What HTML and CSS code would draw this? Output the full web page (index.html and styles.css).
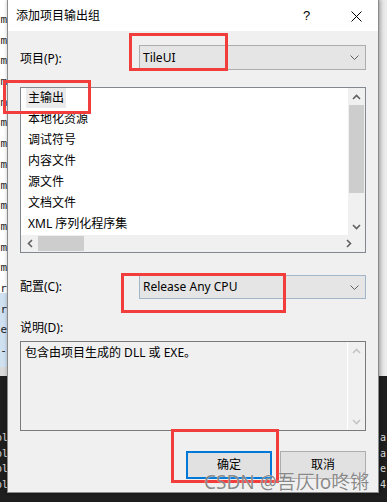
FILE: index.html
```html
<!DOCTYPE html>
<html lang="zh-CN">
<head>
<meta charset="utf-8">
<title>添加项目输出组</title>
<link rel="stylesheet" href="styles.css">
</head>
<body>
<div class="desktop">
  <div class="editor-bg">
    <div class="bg-top">
      <div class="strip-left">
        <div class="code-line">m</div><div class="code-line">m</div><div class="code-line">m</div><div class="code-line">m</div>
        <div class="code-line">m</div><div class="code-line">m</div><div class="code-line">m</div><div class="code-line">m</div>
        <div class="code-line">m</div><div class="code-line">m</div><div class="code-line">m</div><div class="code-line">m</div>
        <div class="code-line">m</div><div class="code-line">ar</div>
        <div class="code-line sel">r.</div><div class="code-line sel">e</div><div class="code-line sel">-)</div>
      </div>
      <div class="strip-mid"></div>
      <div class="strip-right"></div>
    </div>
    <div class="bg-bottom">
      <div class="dark-left">
        <div class="dark-line">ol</div><div class="dark-line">ol</div><div class="dark-line">ol</div><div class="dark-line">ol</div>
      </div>
      <div class="dark-right">
        <div class="dark-line">a</div><div class="dark-line">a</div><div class="dark-line">e</div><div class="dark-line">4</div>
      </div>
    </div>
  </div>

  <div class="dialog">
    <div class="titlebar">
      <span class="title">添加项目输出组</span>
      <span class="help">?</span>
      <svg class="close" width="11" height="11" viewBox="0 0 11 11"><path d="M0.5 0.5 L10.5 10.5 M10.5 0.5 L0.5 10.5" stroke="#000" stroke-width="1" fill="none"/></svg>
    </div>
    <div class="dlg-body">
      <div class="field-row row-project">
        <span class="field-label">项目(P):</span>
        <div class="combo">
          <span class="combo-text">TileUI</span>
          <svg class="combo-arrow" width="9" height="5" viewBox="0 0 9 5"><path d="M0.5 0.5 L4.5 4.5 L8.5 0.5" stroke="#606060" stroke-width="1" fill="none"/></svg>
        </div>
      </div>

      <div class="listbox">
        <div class="list-main">
          <ul class="items">
            <li class="item selected">主输出</li>
            <li class="item">本地化资源</li>
            <li class="item">调试符号</li>
            <li class="item">内容文件</li>
            <li class="item">源文件</li>
            <li class="item">文档文件</li>
            <li class="item">XML 序列化程序集</li>
          </ul>
          <div class="vscroll">
            <div class="sb-btn"><svg width="9" height="6" viewBox="0 0 9 6"><path d="M1 5 L4.5 1.5 L8 5" stroke="#606060" stroke-width="1.6" fill="none"/></svg></div>
            <div class="vthumb"></div>
            <div class="sb-fill"></div>
            <div class="sb-btn"><svg width="9" height="6" viewBox="0 0 9 6"><path d="M1 1 L4.5 4.5 L8 1" stroke="#606060" stroke-width="1.6" fill="none"/></svg></div>
          </div>
        </div>
        <div class="hscroll">
          <div class="sb-btn-h"><svg width="6" height="9" viewBox="0 0 6 9"><path d="M5 1 L1.5 4.5 L5 8" stroke="#606060" stroke-width="1.6" fill="none"/></svg></div>
          <div class="hthumb"></div>
          <div class="sb-fill"></div>
          <div class="sb-btn-h"><svg width="6" height="9" viewBox="0 0 6 9"><path d="M1 1 L4.5 4.5 L1 8" stroke="#606060" stroke-width="1.6" fill="none"/></svg></div>
          <div class="sb-corner"></div>
        </div>
      </div>

      <div class="field-row row-config">
        <span class="field-label">配置(C):</span>
        <div class="combo combo-focus">
          <span class="combo-text">Release Any CPU</span>
          <svg class="combo-arrow" width="9" height="5" viewBox="0 0 9 5"><path d="M0.5 0.5 L4.5 4.5 L8.5 0.5" stroke="#606060" stroke-width="1" fill="none"/></svg>
        </div>
      </div>

      <div class="desc-label">说明(D):</div>
      <div class="textbox">
        <div class="desc-text">包含由项目生成的 DLL 或 EXE。</div>
        <div class="vscroll vscroll-off">
          <div class="sb-btn"><svg width="9" height="6" viewBox="0 0 9 6"><path d="M1 5 L4.5 1.5 L8 5" stroke="#c4c4c4" stroke-width="1.6" fill="none"/></svg></div>
          <div class="sb-fill"></div>
          <div class="sb-btn"><svg width="9" height="6" viewBox="0 0 9 6"><path d="M1 1 L4.5 4.5 L8 1" stroke="#c4c4c4" stroke-width="1.6" fill="none"/></svg></div>
        </div>
      </div>

      <div class="buttons">
        <button class="btn btn-default">确定</button>
        <button class="btn">取消</button>
      </div>
    </div>
  </div>

  <div class="mark mark-project"></div>
  <div class="mark mark-main"></div>
  <div class="mark mark-config"></div>
  <div class="mark mark-ok"></div>
  <div class="watermark">CSDN @吾仄lo咚锵</div>
</div>
</body>
</html>
```
FILE: styles.css
```css
* { box-sizing: border-box; }
html, body { margin: 0; padding: 0; }
body {
  width: 387px;
  height: 502px;
  overflow: hidden;
  font-family: "Noto Sans", "Noto Sans CJK SC", "Microsoft YaHei", sans-serif;
  font-size: 12px;
  color: #000;
}
.desktop {
  position: relative;
  width: 387px;
  height: 502px;
  overflow: hidden;
  background: #1e1e1e;
}

/* background editor */
.editor-bg { display: flex; flex-direction: column; height: 502px; }
.bg-top { display: flex; height: 376px; }
.strip-left {
  width: 7px;
  background: linear-gradient(#fff 0, #fff 293px, #cfe0f1 293px, #cfe0f1 367px, #d9d9d9 367px);
  padding-top: 10px;
  overflow: hidden;
  font-family: "DejaVu Sans Mono", monospace;
  font-size: 11px;
}
.code-line {
  height: 20.7px;
  line-height: 20.7px;
  text-align: right;
  white-space: nowrap;
  direction: rtl;
  color: #1a1a1a;
}
.strip-mid { flex: 1; background: #f0f0f0; }
.strip-right { width: 8px; background: linear-gradient(90deg, #d6d6d6, #e9e9e9 4px, #ececec); }
.bg-bottom {
  flex: 1;
  display: flex;
  justify-content: space-between;
  background: #1e1e1e;
  padding-top: 54px;
  font-family: "DejaVu Sans Mono", monospace;
  font-size: 10px;
  color: #dcdcdc;
}
.dark-left { width: 8px; overflow: hidden; }
.dark-right { width: 7px; overflow: hidden; }
.dark-line { height: 15.7px; line-height: 15.7px; white-space: nowrap; }
.dark-left .dark-line { direction: rtl; text-align: right; }

/* dialog window (positioned on the desktop) */
.dialog {
  position: absolute;
  left: 7px;
  top: 0;
  width: 372px;
  height: 493px;
  background: #f0f0f0;
  border-left: 1px solid #8a8a8a;
  border-right: 1px solid #8a8a8a;
  border-bottom: 1px solid #8a8a8a;
  box-shadow: 2px 0 4px rgba(0,0,0,0.18), -1px 0 3px rgba(0,0,0,0.12);
  display: flex;
  flex-direction: column;
}
.titlebar {
  height: 31px;
  background: #fff;
  display: flex;
  align-items: center;
  padding-left: 8px;
  flex-shrink: 0;
}
.title { flex: 1; line-height: 16px; padding-top: 1px; }
.help { width: 12px; margin-right: 36px; font-size: 13px; line-height: 16px; font-family: "Liberation Sans", sans-serif; }
.close { margin-right: 16px; margin-top: 1px; }

.dlg-body {
  flex: 1;
  padding: 14px 12px 0 12px;
  display: flex;
  flex-direction: column;
}
.field-row { display: flex; align-items: center; }
.field-label { width: 119px; line-height: 16px; }
.row-project .field-label { padding-top: 2px; }
.combo {
  flex: 1;
  height: 25px;
  background: #e5e5e5;
  border: 1px solid #adadad;
  display: flex;
  align-items: center;
  padding-left: 3px;
  padding-right: 6px;
}
.combo-text { flex: 1; line-height: 16px; }
.combo-focus { border-color: #a2b6ca; height: 24px; }
.row-config { margin-top: 22px; }

.listbox {
  margin-top: 17px;
  height: 166px;
  border: 1px solid #828790;
  background: #fff;
  display: flex;
  flex-direction: column;
}
.list-main { flex: 1; display: flex; min-height: 0; }
.items { flex: 1; list-style: none; margin: 0; padding: 0 0 0 5px; overflow: hidden; }
.item { height: 21px; line-height: 20px; padding: 0 2px; width: max-content; }
.item.selected { background: #ebebeb; height: 20px; margin-bottom: 1px; }

.vscroll {
  width: 17px;
  background: #f0f0f0;
  display: flex;
  flex-direction: column;
  align-items: center;
}
.sb-btn { width: 17px; height: 17px; display: flex; align-items: center; justify-content: center; flex-shrink: 0; }
.vthumb { width: 15px; height: 88px; background: #cdcdcd; flex-shrink: 0; }
.sb-fill { flex: 1; }
.hscroll {
  height: 17px;
  background: #f0f0f0;
  display: flex;
  align-items: center;
}
.sb-btn-h { width: 17px; height: 17px; display: flex; align-items: center; justify-content: center; flex-shrink: 0; }
.hthumb { width: 46px; height: 15px; background: #cdcdcd; flex-shrink: 0; }
.sb-corner { width: 8px; height: 17px; flex-shrink: 0; }

.desc-label { margin-top: 21px; line-height: 16px; height: 16px; }
.textbox {
  margin-top: 5px;
  height: 90px;
  border: 1px solid #7a7a7a;
  background: #f0f0f0;
  display: flex;
}
.desc-text { flex: 1; padding: 3px 4px; line-height: 16px; }
.vscroll-off { border-left: 1px solid #fff; width: 18px; }

.buttons {
  margin-top: 20px;
  display: flex;
  justify-content: flex-end;
  gap: 8px;
}
.btn {
  width: 86px;
  height: 28px;
  background: #e1e1e1;
  border: 1px solid #adadad;
  font-family: inherit;
  font-size: 12px;
  color: #000;
  padding: 0;
  line-height: 16px;
}
.btn-default { border: 2px solid #0078d7; }

/* annotation overlays */
.mark { position: absolute; border: 3px solid #f23d3d; }
.mark-project { left: 129px; top: 33px; width: 99px; height: 38px; }
.mark-main { left: 3px; top: 80px; width: 88px; height: 34px; }
.mark-config { left: 121px; top: 273px; width: 165px; height: 40px; }
.mark-ok { left: 171px; top: 429px; width: 108px; height: 54px; }

.watermark {
  position: absolute;
  left: 204px;
  top: 470px;
  font-size: 19px;
  line-height: 24px;
  white-space: nowrap;
  color: rgba(105,105,105,0.78);
  text-shadow: 0 0 1px rgba(255,255,255,0.9);
}
```
